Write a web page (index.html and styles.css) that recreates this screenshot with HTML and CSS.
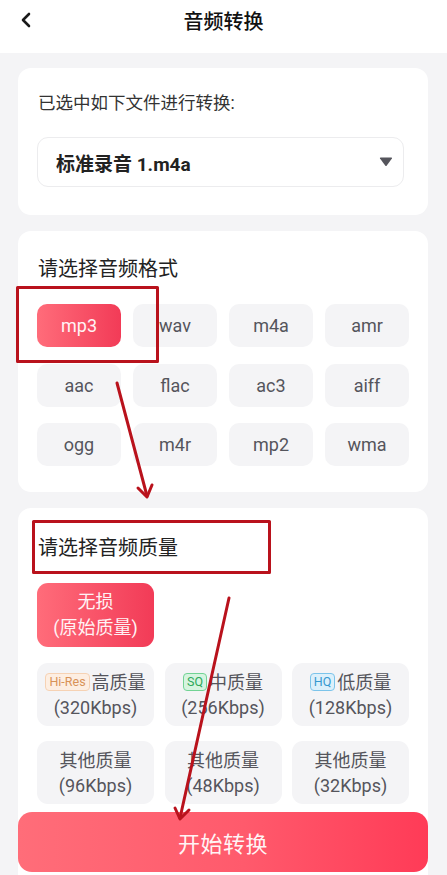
FILE: index.html
```html
<!DOCTYPE html>
<html lang="zh-CN">
<head>
<meta charset="utf-8">
<meta name="viewport" content="width=device-width, initial-scale=1">
<title>音频转换</title>
<link rel="stylesheet" href="styles.css">
</head>
<body>
<header class="topbar">
  <span class="back">
    <svg width="12" height="16" viewBox="0 0 12 16"><path d="M9 2 L3 8 L9 14" fill="none" stroke="#1a1a1a" stroke-width="2.6" stroke-linecap="round" stroke-linejoin="round"/></svg>
  </span>
  <h1 class="title">音频转换</h1>
</header>

<main class="content">
  <section class="card card-file">
    <div class="file-label">已选中如下文件进行转换:</div>
    <div class="select">
      <span class="select-text">标准录音 1.m4a</span>
      <svg class="caret" width="14" height="10" viewBox="0 0 14 10"><path d="M1 1.5 Q0.5 0.5 1.8 0.5 H12.2 Q13.5 0.5 12.9 1.5 L7.8 8.6 Q7 9.6 6.2 8.6 Z" fill="#55555c"/></svg>
    </div>
  </section>

  <section class="card card-format">
    <h2 class="card-title">请选择音频格式</h2>
    <div class="format-grid">
      <div class="chip chip-active">mp3</div>
      <div class="chip">wav</div>
      <div class="chip">m4a</div>
      <div class="chip">amr</div>
      <div class="chip">aac</div>
      <div class="chip">flac</div>
      <div class="chip">ac3</div>
      <div class="chip">aiff</div>
      <div class="chip">ogg</div>
      <div class="chip">m4r</div>
      <div class="chip">mp2</div>
      <div class="chip">wma</div>
    </div>
  </section>

  <section class="card card-quality">
    <h2 class="card-title">请选择音频质量</h2>
    <div class="lossless">
      <span>无损</span>
      <span>(原始质量)</span>
    </div>
    <div class="quality-grid">
      <div class="qbtn">
        <span class="qline"><span class="badge badge-hires">Hi-Res</span>高质量</span>
        <span class="qline">(320Kbps)</span>
      </div>
      <div class="qbtn">
        <span class="qline"><span class="badge badge-sq">SQ</span>中质量</span>
        <span class="qline">(256Kbps)</span>
      </div>
      <div class="qbtn">
        <span class="qline"><span class="badge badge-hq">HQ</span>低质量</span>
        <span class="qline">(128Kbps)</span>
      </div>
      <div class="qbtn">
        <span class="qline">其他质量</span>
        <span class="qline">(96Kbps)</span>
      </div>
      <div class="qbtn">
        <span class="qline">其他质量</span>
        <span class="qline">(48Kbps)</span>
      </div>
      <div class="qbtn">
        <span class="qline">其他质量</span>
        <span class="qline">(32Kbps)</span>
      </div>
    </div>
  </section>
</main>

<button class="start-btn">开始转换</button>

<svg class="annotations" width="447" height="875" viewBox="0 0 447 875">
  <g fill="none" stroke="#b9121c" stroke-width="3" stroke-linecap="round" stroke-linejoin="round">
    <rect x="17.5" y="287.5" width="140" height="74"/>
    <rect x="33.5" y="521.5" width="236" height="51"/>
    <path d="M117 383 L147 496"/>
    <path d="M138 488 L147 497 L152 485"/>
    <path d="M229 598 L180 818"/>
    <path d="M175 808 L180 819 L189 810"/>
  </g>
</svg>
</body>
</html>
```

FILE: styles.css
```css
* {
  box-sizing: border-box;
}

html, body {
  margin: 0;
  padding: 0;
}

body {
  position: relative;
  background: #f4f4f6;
  font-family: Roboto, "Noto Sans CJK SC", "Noto Sans", sans-serif;
  color: #222;
  width: 447px;
  height: 875px;
  overflow: hidden;
}

.topbar {
  height: 53px;
  background: #ffffff;
  display: flex;
  align-items: center;
  justify-content: center;
  position: relative;
}

.back {
  position: absolute;
  left: 20px;
  top: 12px;
  width: 12px;
  height: 16px;
  display: flex;
}

.title {
  margin: 0;
  font-size: 20px;
  font-weight: 500;
  color: #111;
  line-height: 28px;
  margin-top: -10px;
}

.content {
  padding: 15px 19px 0 18px;
  display: flex;
  flex-direction: column;
  gap: 16px;
}

.card {
  background: #ffffff;
  border-radius: 13px;
  padding: 0 19px;
}

.card-file {
  padding-top: 23px;
  padding-bottom: 28px;
}

.file-label {
  font-size: 17.5px;
  line-height: 24px;
  color: #333;
  padding-left: 1px;
  margin-bottom: 22px;
}

.select {
  height: 50px;
  margin-right: 5px;
  border: 1.5px solid #ececee;
  border-radius: 11px;
  display: flex;
  align-items: center;
  justify-content: space-between;
  padding: 0 10px 0 18px;
}

.select-text {
  font-size: 19px;
  font-weight: 700;
  color: #222;
}

.card-title {
  margin: 0;
  font-size: 20px;
  font-weight: 400;
  line-height: 28px;
  color: #222;
  padding-left: 1px;
}

.card-format {
  padding-top: 24px;
  padding-bottom: 26px;
}

.format-grid {
  margin-top: 21px;
  display: grid;
  grid-template-columns: repeat(4, 84px);
  column-gap: 12px;
  row-gap: 16.5px;
}

.chip {
  height: 43px;
  border-radius: 10px;
  background: #f4f4f6;
  color: #55555c;
  font-size: 18px;
  display: flex;
  align-items: center;
  justify-content: center;
}

.chip-active {
  background: linear-gradient(90deg, #ff6c7a 0%, #f23b57 100%);
  color: #fff2f4;
}

.card-quality {
  padding-top: 26px;
  padding-bottom: 72px;
  border-radius: 13px 13px 0 0;
}

.lossless {
  margin-top: 21px;
  width: 117px;
  height: 64px;
  border-radius: 11px;
  background: linear-gradient(90deg, #ff6c7a 0%, #f23b57 100%);
  color: #fff2f4;
  font-size: 18px;
  line-height: 26px;
  display: flex;
  flex-direction: column;
  align-items: center;
  justify-content: center;
}

.quality-grid {
  margin-top: 16px;
  display: grid;
  grid-template-columns: repeat(3, 1fr);
  column-gap: 10.5px;
  row-gap: 15px;
}

.qbtn {
  height: 63px;
  border-radius: 11px;
  background: #f4f4f6;
  color: #55555c;
  font-size: 18px;
  line-height: 25px;
  display: flex;
  flex-direction: column;
  align-items: center;
  justify-content: center;
}

.qline {
  display: flex;
  align-items: center;
  white-space: nowrap;
}

.badge {
  font-size: 12.5px;
  line-height: 16px;
  padding: 0 3px;
  border-radius: 4px;
  border: 1px solid;
  margin-right: 2px;
}

.badge-hires {
  background: #fdeee2;
  border-color: #f6d2b4;
  color: #d89258;
}

.badge-sq {
  background: #d6f4e0;
  border-color: #72d394;
  color: #2ea85a;
}

.badge-hq {
  background: #dcf0fb;
  border-color: #7cc4ea;
  color: #3799d0;
}

.start-btn {
  position: fixed;
  left: 18px;
  bottom: 3px;
  width: 410px;
  height: 60px;
  border: none;
  border-radius: 14px;
  background: linear-gradient(90deg, #ff6d79 0%, #ff5a6c 55%, #ff3b57 100%);
  color: #fff4f5;
  font-family: Roboto, "Noto Sans CJK SC", "Noto Sans", sans-serif;
  font-size: 22px;
  letter-spacing: 0.5px;
  padding: 0;
}

.annotations {
  position: absolute;
  top: 0;
  left: 0;
  pointer-events: none;
}
```
